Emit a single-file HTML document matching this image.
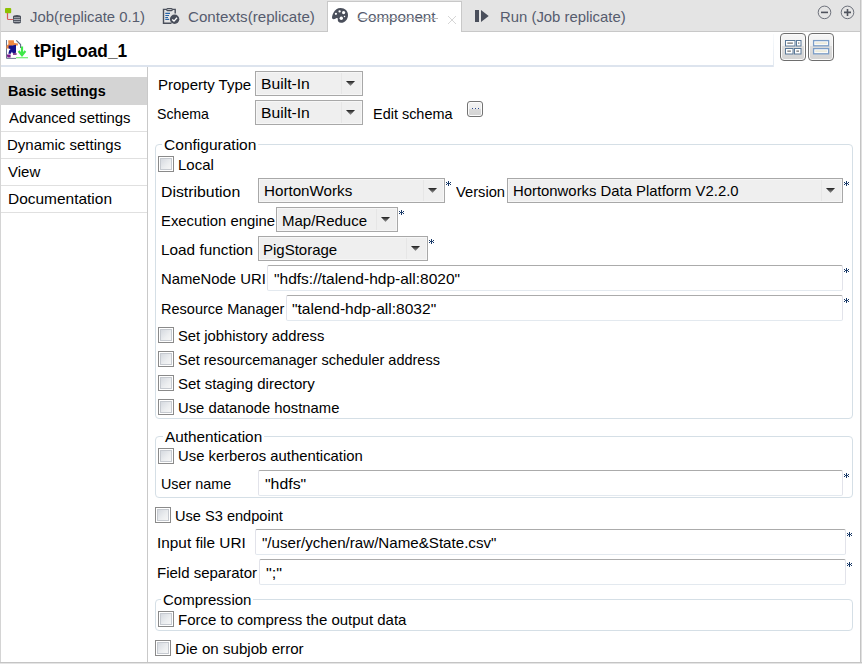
<!DOCTYPE html>
<html><head><meta charset="utf-8">
<style>
*,*::before,*::after{box-sizing:border-box;margin:0;padding:0}
html,body{width:862px;height:664px;overflow:hidden;background:#fff}
body{position:relative;font-family:"Liberation Sans",sans-serif;font-size:15px;color:#000}
.a{position:absolute}
.t{position:absolute;white-space:pre;line-height:16px;height:16px}
.tab{color:#565c6e}
.cb{position:absolute;width:16px;height:16px;border:1px solid #8a8a8a;background:#fff}
.cb::after{content:"";position:absolute;left:1px;top:1px;width:12px;height:12px;border:1px solid #c6cad0;background:linear-gradient(135deg,#d6dae0 0%,#eceef0 60%,#f6f6f6 100%)}
.combo{position:absolute;height:25px;border:1px solid #a8a8a8;background:#efefef}
.combo::before{content:"";position:absolute;left:0;top:0;right:0;bottom:0;border:1px solid #f6f6f6}
.combo .btn{position:absolute;top:1px;bottom:1px;right:1px;width:20px;border-left:1px solid #e6e6e6;background:#efefef}
.combo .arr{position:absolute;left:4px;top:8px;width:9px;height:5px;clip-path:polygon(0 0,100% 0,50% 100%);background:linear-gradient(#1e1e1e,#444 30%,#9a9a9a)}
.txt{position:absolute;height:26px;border:1px solid #e2e3ea;border-top-color:#ababab;border-bottom-color:#e3e9ef;background:#fff;border-radius:2px}
.star{position:absolute;overflow:visible}
.grp{position:absolute;border:1px solid #d5dfe6;border-radius:4px}
.gl{position:absolute;background:#fff;white-space:pre;line-height:16px;padding:0 2px}
.side{position:absolute;left:1px;width:146px;height:27px;border-bottom:1px solid #e0e0e0}
</style></head><body>

<!-- outer frame -->
<div class="a" style="left:0;top:0;width:1px;height:663px;background:#d4d4d4"></div>
<div class="a" style="left:860px;top:0;width:1px;height:663px;background:#c4c4c4"></div>
<div class="a" style="left:861px;top:0;width:1px;height:664px;background:#e0e0e0"></div>
<div class="a" style="left:0;top:662px;width:862px;height:1px;background:#c4c4c4"></div>
<div class="a" style="left:0;top:663px;width:862px;height:1px;background:#e4e4e4"></div>

<!-- tab bar -->
<div class="a" style="left:1px;top:0;width:859px;height:31px;background:#e4e4e4"></div>
<div class="a" style="left:1px;top:31px;width:859px;height:1px;background:#c8c8c8"></div>
<!-- active tab -->
<div class="a" style="left:327px;top:1px;width:135px;height:31px;background:#fff;border:1px solid #c8c8c8;border-bottom:none"></div>

<!-- job icon -->
<svg class="a" style="left:4px;top:7px" width="20" height="19" viewBox="0 0 20 19">
 <rect x="1" y="1" width="6.2" height="5.2" rx="1" fill="#8cc000"/>
 <path d="M3.5 6 V11.4 Q3.5 12.5 4.6 12.5 H9.2" stroke="#d9595a" stroke-width="1.2" fill="none"/>
 <ellipse cx="13" cy="9.7" rx="4" ry="1.6" fill="#4a4f5b"/>
 <rect x="9" y="9.7" width="8" height="5.3" fill="#4a4f5b"/>
 <ellipse cx="13" cy="15" rx="4" ry="1.5" fill="#4a4f5b"/>
 <path d="M10 10.7 H16 M9.6 12.5 H16.4 M9.6 14.4 H16.4" stroke="#b4b8c0" stroke-width="0.9"/>
</svg>
<div class="t tab" id="x0" style="left:30.01px;top:9px;transform:scaleX(0.9912);transform-origin:0 0">Job(replicate 0.1)</div>

<!-- contexts icon -->
<svg class="a" style="left:162px;top:7px" width="20" height="18" viewBox="0 0 20 18">
 <path d="M9.5 16.2 H1.5 V2.4 H4.2 M10.6 2.4 H13.2 V6.6" stroke="#4a4f5b" stroke-width="1.4" fill="none"/>
 <rect x="4.6" y="1.6" width="5.8" height="2" rx="1" stroke="#4a4f5b" stroke-width="1.2" fill="none"/>
 <path d="M3.3 6.4 H8 M3.3 8.5 H7 M3.3 10.5 H6 M3.3 12.4 H7" stroke="#2563a8" stroke-width="1.1"/>
 <circle cx="12.6" cy="12.3" r="4.7" fill="#4a4f5b"/>
 <path d="M10.2 12.4 L12 14.1 L15 10.8" stroke="#fff" stroke-width="1.4" fill="none"/>
</svg>
<div class="t tab" id="x1" style="left:187.99px;top:9px;transform:scaleX(1.0081);transform-origin:0 0">Contexts(replicate)</div>

<!-- component palette icon -->
<svg class="a" style="left:331px;top:7px" width="18" height="17" viewBox="0 0 18 17">
 <path d="M9.5 1 C14 1 17 4 17 8 C17 12.5 14 15.8 10 15.8 C7.6 15.8 6.6 14.4 6.8 12.6 C7 11.2 6.2 10.6 5.2 11.2 C3.6 12.2 2.2 12.6 1.4 11.8 C0.6 10.9 1.2 8 2.5 5.8 C4 3 6.5 1 9.5 1 Z" fill="#4a4f5b"/>
 <circle cx="8.6" cy="4.4" r="1.15" fill="#fff"/>
 <circle cx="4.9" cy="6.8" r="1.1" fill="#fff"/>
 <circle cx="12.6" cy="5.6" r="1.6" fill="#fff"/>
 <circle cx="10.3" cy="11.3" r="1.7" fill="#fff"/>
 <circle cx="13.5" cy="9.4" r="0.75" fill="#fff"/>
</svg>
<div class="t tab" id="x2" style="left:356.99px;top:9px;transform:scaleX(1.0128);transform-origin:0 0">Component</div>
<div class="a" style="left:358px;top:18px;width:80px;height:1px;background:#b6b6b8"></div>
<svg class="a" style="left:447px;top:15px" width="10" height="10" viewBox="0 0 10 10"><path d="M1 1 L9 9 M9 1 L1 9" stroke="#d6d6d6" stroke-width="1"/></svg>

<!-- run icon -->
<svg class="a" style="left:474px;top:9px" width="16" height="14" viewBox="0 0 16 14">
 <rect x="1" y="1" width="4" height="12" fill="#4a4f5b"/>
 <path d="M7 1 L14.7 7 L7 13 Z" fill="#4a4f5b"/>
</svg>
<div class="t tab" id="x3" style="left:500.01px;top:9px;transform:scaleX(0.9919);transform-origin:0 0">Run (Job replicate)</div>

<!-- min/max -->
<svg class="a" style="left:816px;top:4px" width="40" height="17" viewBox="0 0 40 17">
 <circle cx="8.5" cy="8.4" r="6.3" stroke="#6d717b" stroke-width="1" fill="none"/>
 <path d="M5 8.4 H12" stroke="#4e525c" stroke-width="1.6"/>
 <circle cx="31.5" cy="8.4" r="6.3" stroke="#6d717b" stroke-width="1" fill="none"/>
 <path d="M28 8.4 H35 M31.5 5 V12" stroke="#4e525c" stroke-width="1.6"/>
</svg>

<!-- title row -->
<div class="a" style="left:1px;top:65px;width:773px;height:2px;background:#dde4ee"></div>
<div class="a" style="left:773px;top:34px;width:1px;height:33px;background:linear-gradient(#f8fafc,#e2e8f0)"></div>
<svg class="a" style="left:2px;top:36px" width="28" height="28" viewBox="2 36 28 28">
 <path d="M6.5 40 V58.4 H16" stroke="#6a7890" stroke-width="1" fill="none"/>
 <path d="M16.3 40.3 L20.6 44.6 V48" stroke="#5a6a85" stroke-width="1.1" fill="none"/>
 <path d="M8.2 40.2 L13.8 40.2 L14.2 43 L18 43.6 L17.8 45.6 L12.2 45.6 L11.4 48.6 L6.2 48.6 L6.6 45.4 L8.4 44.2 Z" fill="#f08a42"/>
 <path d="M8.6 45.6 L12.2 45.6 L16 44.8 L16 52.6 L15 53.3 L12.6 53.3 L12 51.4 L10.8 53.8 L8.3 53.8 L9.2 50.6 L10.6 49 L8.6 48.6 Z" fill="#12128a"/>
 <path d="M6.8 54.6 L10.6 54.6 L10.6 57.5 L7.4 57.5 Z" fill="#7a1a8a"/>
 <path d="M13 53.2 L16.6 53.2 L16.6 54.8 L13 54.8 Z" fill="#6a1a7a"/>
 <path d="M22 46.5 V54 M18.6 51 L22 55.2 L25.4 51" stroke="#3ee848" stroke-width="2.2" fill="none"/>
 <path d="M16 57.7 H28" stroke="#70ef70" stroke-width="1.2"/>
</svg>
<div class="t" id="x4" style="left:34.00px;top:42px;font-weight:bold;font-size:18px;line-height:18px;height:18px;transform:scaleX(0.9596);transform-origin:0 0">tPigLoad_1</div>

<!-- layout buttons -->
<div class="a" style="left:780px;top:33px;width:26px;height:28px;border:1.5px solid #6e6e6e;border-radius:4px;background:linear-gradient(#f6f6f6 0,#efefef 46%,#dedede 47%,#d3d3d3 100%);box-shadow:inset 0 0 0 1px #fafafa"></div>
<div class="a" style="left:808px;top:33px;width:26px;height:28px;border:1.5px solid #6e6e6e;border-radius:4px;background:linear-gradient(#f6f6f6 0,#efefef 46%,#dedede 47%,#d3d3d3 100%);box-shadow:inset 0 0 0 1px #fafafa"></div>
<svg class="a" style="left:778px;top:31px" width="58" height="32" viewBox="778 31 58 32">
 <g fill="#fff" stroke="#5a7898" stroke-width="1">
  <rect x="785.5" y="40.5" width="9.5" height="5.5"/>
  <rect x="796.5" y="40.5" width="4.5" height="5.5"/>
  <rect x="785.5" y="48.5" width="7.5" height="5.5"/>
  <rect x="794.5" y="48.5" width="6.5" height="5.5"/>
 </g>
 <g fill="#8a8a8a">
  <rect x="787.3" y="42.4" width="5.6" height="1.5"/>
  <rect x="798.2" y="42.2" width="1.1" height="1.8"/>
  <rect x="787.3" y="50.4" width="3.6" height="1.5"/>
  <rect x="796.3" y="50.4" width="2.7" height="1.5"/>
 </g>
 <g fill="#fff" stroke="#7b9dc7" stroke-width="1.3">
  <rect x="813.6" y="40.6" width="15" height="5.2"/>
  <rect x="813.6" y="48.6" width="15" height="5.2"/>
 </g>
 <g fill="#ecebdc">
  <rect x="815.2" y="42.2" width="11.8" height="2"/>
  <rect x="815.2" y="50.2" width="11.8" height="2"/>
 </g>
</svg>

<!-- sidebar -->
<div class="a" style="left:147px;top:67px;width:1px;height:595px;background:#c9c9c9"></div>
<div class="side" style="top:77px;height:28px;background:#d4d4d4;border-bottom-color:#d4d4d4"></div>
<div class="side" style="top:105px"></div>
<div class="side" style="top:132px"></div>
<div class="side" style="top:159px"></div>
<div class="side" style="top:186px"></div>
<div class="t" id="x5" style="left:8.04px;top:83px;font-weight:bold;font-size:15px;transform:scaleX(0.9601);transform-origin:0 0">Basic settings</div>
<div class="t" id="x6" style="left:9.00px;top:110px;transform:scaleX(0.9917);transform-origin:0 0">Advanced settings</div>
<div class="t" id="x7" style="left:7.00px;top:137px;transform:scaleX(1.0000);transform-origin:0 0">Dynamic settings</div>
<div class="t" id="x8" style="left:8.00px;top:164px;transform:scaleX(1.0000);transform-origin:0 0">View</div>
<div class="t" id="x9" style="left:7.97px;top:191px;transform:scaleX(1.0306);transform-origin:0 0">Documentation</div>

<!-- content -->
<div class="t" id="x10" style="left:158.00px;top:77px;transform:scaleX(1.0002);transform-origin:0 0">Property Type</div>
<div class="combo" style="left:255px;top:71px;width:108px"><div class="btn"><div class="arr"></div></div></div>
<div class="t" id="x11" style="left:260.95px;top:76px;transform:scaleX(1.0455);transform-origin:0 0">Built-In</div>
<div class="t" id="x12" style="left:157.06px;top:106px;transform:scaleX(0.9434);transform-origin:0 0">Schema</div>
<div class="combo" style="left:255px;top:100px;width:108px"><div class="btn"><div class="arr"></div></div></div>
<div class="t" id="x13" style="left:260.95px;top:105px;transform:scaleX(1.0455);transform-origin:0 0">Built-In</div>
<div class="t" id="x14" style="left:373.04px;top:106px;transform:scaleX(0.9630);transform-origin:0 0">Edit schema</div>
<div class="a" style="left:467px;top:101px;width:16px;height:16px;border:1.3px solid #737373;border-radius:3px;background:linear-gradient(#f4f4f4 0,#ececec 50%,#dadada 52%,#d4d4d4 100%);box-shadow:inset 0 0 0 1px #fcfcfc"></div>
<div class="a" style="left:472px;top:108px;width:7px;height:1px;background:repeating-linear-gradient(90deg,#2b4a8e 0 1px,#f0f0f0 1px 3px)"></div>

<!-- Configuration group -->
<div class="grp" style="left:155px;top:144px;width:698px;height:275px"></div>
<div class="gl" id="x15" style="left:161.90px;top:137px;transform:scaleX(1.0345);transform-origin:0 0">Configuration</div>
<div class="cb" style="left:158px;top:156px"></div>
<div class="t" id="x16" style="left:178.00px;top:157px;transform:scaleX(1.0000);transform-origin:0 0">Local</div>

<div class="t" id="x17" style="left:160.94px;top:184px;transform:scaleX(1.0556);transform-origin:0 0">Distribution</div>
<div class="combo" style="left:258px;top:178px;width:187px"><div class="btn"><div class="arr"></div></div></div>
<div class="t" id="x18" style="left:263.99px;top:183px;transform:scaleX(1.0118);transform-origin:0 0">HortonWorks</div>
<svg class="star" style="left:446px;top:181px" width="5" height="5"><g fill="#183968" shape-rendering="crispEdges"><rect x="2" y="0" width="1" height="5"/><rect x="1" y="2" width="3" height="1"/><rect x="0" y="1" width="1" height="1"/><rect x="4" y="1" width="1" height="1"/><rect x="0" y="3" width="1" height="1"/><rect x="4" y="3" width="1" height="1"/></g></svg>
<div class="t" id="x19" style="left:456.00px;top:184px;transform:scaleX(0.9792);transform-origin:0 0">Version</div>
<div class="combo" style="left:507px;top:178px;width:336px"><div class="btn"><div class="arr"></div></div></div>
<div class="t" id="x20" style="left:513.01px;top:183px;transform:scaleX(0.9911);transform-origin:0 0">Hortonworks Data Platform V2.2.0</div>
<svg class="star" style="left:844px;top:181px" width="5" height="5"><g fill="#183968" shape-rendering="crispEdges"><rect x="2" y="0" width="1" height="5"/><rect x="1" y="2" width="3" height="1"/><rect x="0" y="1" width="1" height="1"/><rect x="4" y="1" width="1" height="1"/><rect x="0" y="3" width="1" height="1"/><rect x="4" y="3" width="1" height="1"/></g></svg>

<div class="t" id="x21" style="left:161.01px;top:213px;transform:scaleX(0.9912);transform-origin:0 0">Execution engine</div>
<div class="combo" style="left:276px;top:207px;width:122px"><div class="btn"><div class="arr"></div></div></div>
<div class="t" id="x22" style="left:282.00px;top:213px;transform:scaleX(1.0000);transform-origin:0 0">Map/Reduce</div>
<svg class="star" style="left:399px;top:210px" width="5" height="5"><g fill="#183968" shape-rendering="crispEdges"><rect x="2" y="0" width="1" height="5"/><rect x="1" y="2" width="3" height="1"/><rect x="0" y="1" width="1" height="1"/><rect x="4" y="1" width="1" height="1"/><rect x="0" y="3" width="1" height="1"/><rect x="4" y="3" width="1" height="1"/></g></svg>

<div class="t" id="x23" style="left:160.98px;top:242px;transform:scaleX(1.0230);transform-origin:0 0">Load function</div>
<div class="combo" style="left:258px;top:236px;width:170px"><div class="btn"><div class="arr"></div></div></div>
<div class="t" id="x24" style="left:263.00px;top:242px;transform:scaleX(1.0000);transform-origin:0 0">PigStorage</div>
<svg class="star" style="left:429px;top:239px" width="5" height="5"><g fill="#183968" shape-rendering="crispEdges"><rect x="2" y="0" width="1" height="5"/><rect x="1" y="2" width="3" height="1"/><rect x="0" y="1" width="1" height="1"/><rect x="4" y="1" width="1" height="1"/><rect x="0" y="3" width="1" height="1"/><rect x="4" y="3" width="1" height="1"/></g></svg>

<div class="t" id="x25" style="left:161.01px;top:271px;transform:scaleX(0.9903);transform-origin:0 0">NameNode URI</div>
<div class="txt" style="left:267px;top:265px;width:576px"></div>
<div class="t" id="x26" style="left:273.97px;top:271px;transform:scaleX(1.0339);transform-origin:0 0">"hdfs://talend-hdp-all:8020"</div>
<svg class="star" style="left:844px;top:268px" width="5" height="5"><g fill="#183968" shape-rendering="crispEdges"><rect x="2" y="0" width="1" height="5"/><rect x="1" y="2" width="3" height="1"/><rect x="0" y="1" width="1" height="1"/><rect x="4" y="1" width="1" height="1"/><rect x="0" y="3" width="1" height="1"/><rect x="4" y="3" width="1" height="1"/></g></svg>

<div class="t" id="x27" style="left:161.04px;top:301px;transform:scaleX(0.9677);transform-origin:0 0">Resource Manager</div>
<div class="txt" style="left:286px;top:295px;width:557px"></div>
<div class="t" id="x28" style="left:291.96px;top:301px;transform:scaleX(1.0365);transform-origin:0 0">"talend-hdp-all:8032"</div>
<svg class="star" style="left:844px;top:298px" width="5" height="5"><g fill="#183968" shape-rendering="crispEdges"><rect x="2" y="0" width="1" height="5"/><rect x="1" y="2" width="3" height="1"/><rect x="0" y="1" width="1" height="1"/><rect x="4" y="1" width="1" height="1"/><rect x="0" y="3" width="1" height="1"/><rect x="4" y="3" width="1" height="1"/></g></svg>

<div class="cb" style="left:158px;top:327px"></div>
<div class="t" id="x29" style="left:178.01px;top:328px;transform:scaleX(0.9863);transform-origin:0 0">Set jobhistory address</div>
<div class="cb" style="left:158px;top:351px"></div>
<div class="t" id="x30" style="left:178.03px;top:352px;transform:scaleX(0.9665);transform-origin:0 0">Set resourcemanager scheduler address</div>
<div class="cb" style="left:158px;top:375px"></div>
<div class="t" id="x31" style="left:178.00px;top:376px;transform:scaleX(1.0000);transform-origin:0 0">Set staging directory</div>
<div class="cb" style="left:158px;top:399px"></div>
<div class="t" id="x32" style="left:178.01px;top:400px;transform:scaleX(0.9876);transform-origin:0 0">Use datanode hostname</div>

<!-- Authentication group -->
<div class="grp" style="left:155px;top:436px;width:698px;height:62px"></div>
<div class="gl" id="x33" style="left:162.96px;top:429px;transform:scaleX(1.0215);transform-origin:0 0">Authentication</div>
<div class="cb" style="left:158px;top:448px"></div>
<div class="t" id="x34" style="left:178.01px;top:448px;transform:scaleX(0.9891);transform-origin:0 0">Use kerberos authentication</div>
<div class="t" id="x35" style="left:161.04px;top:476px;transform:scaleX(0.9577);transform-origin:0 0">User name</div>
<div class="txt" style="left:258px;top:470px;width:585px"></div>
<div class="t" id="x36" style="left:264.94px;top:476px;transform:scaleX(1.0556);transform-origin:0 0">"hdfs"</div>
<svg class="star" style="left:844px;top:473px" width="5" height="5"><g fill="#183968" shape-rendering="crispEdges"><rect x="2" y="0" width="1" height="5"/><rect x="1" y="2" width="3" height="1"/><rect x="0" y="1" width="1" height="1"/><rect x="4" y="1" width="1" height="1"/><rect x="0" y="3" width="1" height="1"/><rect x="4" y="3" width="1" height="1"/></g></svg>

<div class="cb" style="left:155px;top:507px"></div>
<div class="t" id="x37" style="left:175.03px;top:508px;transform:scaleX(0.9725);transform-origin:0 0">Use S3 endpoint</div>
<div class="t" id="x38" style="left:156.97px;top:535px;transform:scaleX(1.0242);transform-origin:0 0">Input file URI</div>
<div class="txt" style="left:255px;top:529px;width:591px"></div>
<div class="t" id="x39" style="left:261.99px;top:535px;transform:scaleX(1.0087);transform-origin:0 0">"/user/ychen/raw/Name&amp;State.csv"</div>
<svg class="star" style="left:847px;top:532px" width="5" height="5"><g fill="#183968" shape-rendering="crispEdges"><rect x="2" y="0" width="1" height="5"/><rect x="1" y="2" width="3" height="1"/><rect x="0" y="1" width="1" height="1"/><rect x="4" y="1" width="1" height="1"/><rect x="0" y="3" width="1" height="1"/><rect x="4" y="3" width="1" height="1"/></g></svg>
<div class="t" id="x40" style="left:157.00px;top:565px;transform:scaleX(1.0000);transform-origin:0 0">Field separator</div>
<div class="txt" style="left:259px;top:559px;width:587px"></div>
<div class="t" id="x41" style="left:265.92px;top:565px;transform:scaleX(1.0833);transform-origin:0 0">";"</div>
<svg class="star" style="left:847px;top:562px" width="5" height="5"><g fill="#183968" shape-rendering="crispEdges"><rect x="2" y="0" width="1" height="5"/><rect x="1" y="2" width="3" height="1"/><rect x="0" y="1" width="1" height="1"/><rect x="4" y="1" width="1" height="1"/><rect x="0" y="3" width="1" height="1"/><rect x="4" y="3" width="1" height="1"/></g></svg>

<!-- Compression group -->
<div class="grp" style="left:155px;top:599px;width:698px;height:32px"></div>
<div class="gl" id="x42" style="left:160.99px;top:592px;transform:scaleX(1.0004);transform-origin:0 0">Compression</div>
<div class="cb" style="left:158px;top:611px"></div>
<div class="t" id="x43" style="left:178.00px;top:612px;transform:scaleX(1.0000);transform-origin:0 0">Force to compress the output data</div>

<div class="cb" style="left:155px;top:640px"></div>
<div class="t" id="x44" style="left:174.99px;top:641px;transform:scaleX(1.0082);transform-origin:0 0">Die on subjob error</div>

</body></html>
